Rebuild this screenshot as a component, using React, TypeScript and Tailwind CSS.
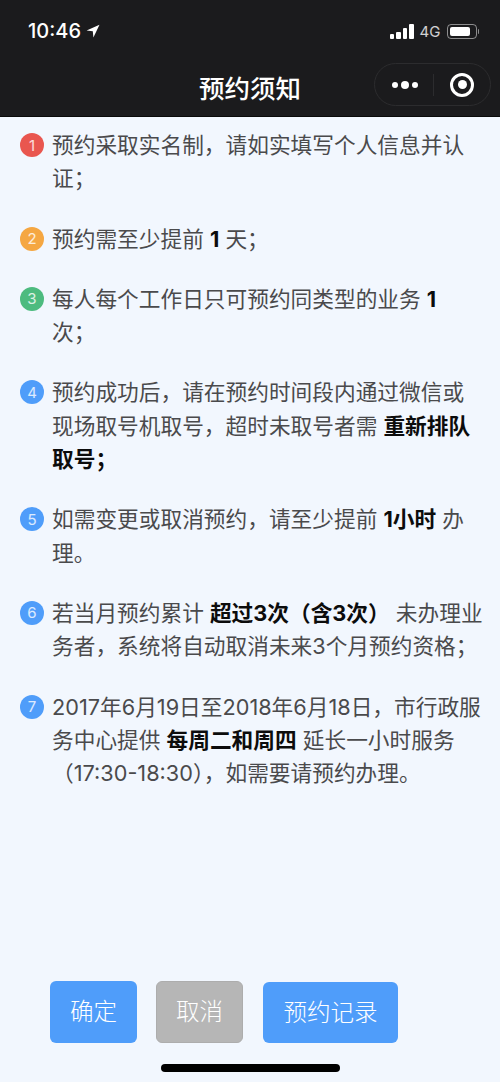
import React from 'react';

const BLUE = 'bg-[#4f9dfa]';

const Notice: React.FC<{ n: number; color: string; children: React.ReactNode }> = ({ n, color, children }) => (
  <div className="flex items-start">
    <span className={`mt-[4px] flex h-[24px] w-[24px] shrink-0 items-center justify-center rounded-full text-[15px] leading-none text-white/80 ${color}`}>
      {n}
    </span>
    <p className="ml-[8px] w-[432px] text-[21.7px] leading-[33.3px] text-[#4a4a4c]">{children}</p>
  </div>
);

const B: React.FC<{ children: React.ReactNode }> = ({ children }) => (
  <strong className="font-bold text-[#0c0c0c]">{children}</strong>
);

export default function App() {
  return (
    <div className="flex h-[1082px] w-[500px] flex-col overflow-hidden bg-[#f2f7fe] font-['Inter','Noto_Sans_CJK_SC',sans-serif]">
      <header className="h-[117px] shrink-0 border-b border-[#0a0a0a] bg-[#1b1b1d] text-white">
        <div className="flex h-[62px] items-center justify-between pl-[28px] pr-[21px]">
          <div className="flex items-center gap-[5px]">
            <span className="text-[20px] font-medium leading-none">10:46</span>
            <svg width="14" height="14" viewBox="0 0 14 14"><path d="M13.5 .8 .6 6.6l6.2.6.6 6.2z" fill="#fff" /></svg>
          </div>
          <div className="flex items-center gap-[6px]">
            <div className="flex items-end gap-[2px]">
              <i className="h-[5px] w-[4.5px] rounded-[1px] bg-white" />
              <i className="h-[7px] w-[4.5px] rounded-[1px] bg-white" />
              <i className="h-[11px] w-[4.5px] rounded-[1px] bg-white" />
              <i className="h-[15px] w-[4.5px] rounded-[1px] bg-white" />
            </div>
            <span className="text-[15px] leading-none text-white/80">4G</span>
            <div className="flex items-center gap-[1px]">
              <div className="flex h-[15px] w-[30px] items-center rounded-[4px] border border-white/50 p-[2px]">
                <div className="h-full w-[20px] rounded-[2px] bg-white" />
              </div>
              <div className="h-[5px] w-[1.5px] rounded-r bg-white/50" />
            </div>
          </div>
        </div>
        <div className="relative flex h-[54px] items-center justify-center">
          <h1 className="text-[25.5px] font-medium leading-none">预约须知</h1>
          <div className="absolute right-[9px] top-[1px] flex h-[43px] w-[117px] items-center rounded-full border border-[#2c2c2e]">
            <div className="flex flex-1 items-center justify-center gap-[3px] pl-[2px]">
              <i className="h-[6px] w-[6px] rounded-full bg-white" />
              <i className="h-[8px] w-[8px] rounded-full bg-white" />
              <i className="h-[6px] w-[6px] rounded-full bg-white" />
            </div>
            <div className="h-[22px] w-px bg-[#2c2c2e]" />
            <div className="flex flex-1 items-center justify-center">
              <div className="flex h-[24px] w-[24px] items-center justify-center rounded-full border-[3px] border-white">
                <div className="h-[9px] w-[9px] rounded-full bg-white" />
              </div>
            </div>
          </div>
        </div>
      </header>

      <main className="flex flex-col gap-[27px] pl-[20px] pt-[12px]">
        <Notice n={1} color="bg-[#e9564f]">预约采取实名制，请如实填写个人信息并认证；</Notice>
        <Notice n={2} color="bg-[#f5a742]">预约需至少提前 <B>1</B> 天；</Notice>
        <Notice n={3} color="bg-[#4dbb7f]">每人每个工作日只可预约同类型的业务 <B>1</B> 次；</Notice>
        <Notice n={4} color={BLUE}>预约成功后，请在预约时间段内通过微信或现场取号机取号，超时未取号者需 <B>重新排队取号；</B></Notice>
        <Notice n={5} color={BLUE}>如需变更或取消预约，请至少提前 <B>1小时</B> 办理。</Notice>
        <Notice n={6} color={BLUE}>若当月预约累计 <B>超过3次（含3次）</B> 未办理业务者，系统将自动取消未来3个月预约资格；</Notice>
        <Notice n={7} color={BLUE}>2017年6月19日至2018年6月18日，市行政服务中心提供 <B>每周二和周四</B> 延长一小时服务（17:30-18:30），如需要请预约办理。</Notice>
      </main>

      <footer className="mt-auto flex flex-col">
        <div className="flex items-start pl-[50px]">
          <button className={`h-[62px] w-[87px] rounded-[6px] text-[23.5px] font-light text-white ${BLUE}`}>确定</button>
          <button className="ml-[19px] h-[62px] w-[87px] rounded-[6px] border border-[#adadad] bg-[#b6b6b6] text-[23.5px] font-light text-white">取消</button>
          <button className={`ml-[20px] mt-[1px] h-[61px] w-[135px] rounded-[6px] text-[23.5px] font-light text-white ${BLUE}`}>预约记录</button>
        </div>
        <div className="mx-auto mb-[10px] mt-[21px] h-[8px] w-[179px] rounded-full bg-black" />
      </footer>
    </div>
  );
}
